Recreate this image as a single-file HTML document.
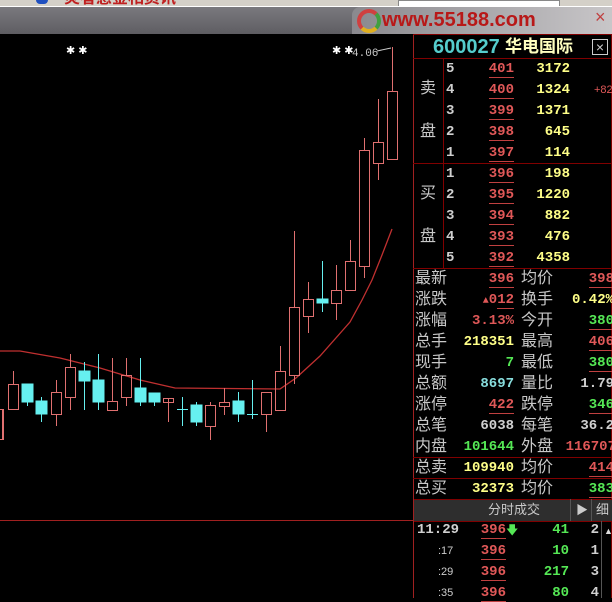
<!DOCTYPE html>
<html><head><meta charset="utf-8"><style>
*{margin:0;padding:0}
body{width:612px;height:598px;background:#000;overflow:hidden;position:relative;font-family:"Liberation Sans","Noto Sans CJK SC",sans-serif}
.a{position:absolute;white-space:nowrap;line-height:18px}
.cj{font-size:16px;color:#c8c8c8}
.n{font-size:14px;font-weight:bold;font-family:"Liberation Mono","Noto Sans CJK SC",monospace;text-align:right}
.r{color:#e05858}.y{color:#ffff88}.g{color:#55e855}.w{color:#d0d0d0}.c{color:#88dddd}
.hl{position:absolute;height:1px;background:#800000}
.vl{position:absolute;width:1px;background:#800000}
u{text-decoration:none;border-bottom:1px solid #c04040}
</style></head><body>
<div style="position:absolute;left:0;top:0;width:612px;height:6px;background:#d4d0c8"></div>
<div style="position:absolute;left:36px;top:-4px;width:12px;height:8px;border-radius:6px;background:#2050c0"></div>
<div class="a" style="left:64px;top:-10px;font-size:16px;color:#c02020;font-weight:bold">炎者感金相资讯</div>
<div style="position:absolute;left:398px;top:0;width:160px;height:5px;background:#fff;border:1px solid #888"></div>
<div style="position:absolute;left:0;top:6px;width:612px;height:1px;background:#fff"></div>
<div style="position:absolute;left:0;top:7px;width:612px;height:27px;background:linear-gradient(#7a797e,#5e5d62)"></div>
<div style="position:absolute;left:352px;top:7px;width:260px;height:27px;background:linear-gradient(90deg,#8a898e,#c8c6c8);border-radius:8px 0 0 0"></div>
<div style="position:absolute;left:357px;top:9px;width:16px;height:16px;border-radius:50%;border:4px solid #d04040;border-right-color:#40a040;border-bottom-color:#e0b020"></div>
<div class="a" style="left:382px;top:7px;font-size:20px;font-weight:bold;color:#b81818;line-height:26px">www.55188.com</div>
<div class="a" style="left:595px;top:8px;font-size:18px;color:#c04040">×</div>

<svg style="position:absolute;left:0;top:0" width="413" height="598">
<line x1="0" y1="520.5" x2="413" y2="520.5" stroke="#a02020"/>
<g fill="#fff" font-size="11"><text x="66" y="54">✱ ✱</text><text x="332" y="54">✱ ✱</text></g>
<text x="352" y="56" fill="#c8c8c8" font-size="11" font-family="Liberation Mono">4.06</text>
<path d="M377 51 L391 48" stroke="#ccc" fill="none"/>
<path d="M0 351 L20 351 L60 358 L100 368 L140 380 L175 388 L280 389 L296 378 L320 356 L350 322 L362 300 L372 280 L382 255 L392 229" stroke="#c03030" fill="none" stroke-width="1.3"/>
<g stroke="#e07070" fill="none">
<path d="M2.5 409V440M13.5 371V384M13.5 409V410M56.5 380V392M56.5 414V426M70.5 354V367M70.5 397V410M112.5 358V401M126.5 358V375M126.5 397V406M168.5 398V422M210.5 402V405M210.5 426V440M224.5 388V402M224.5 406V415M266.5 414V432M280.5 346V371M294.5 231V307M294.5 375V384M308.5 282V299M308.5 316V333M336.5 265V290M336.5 303V320M350.5 240V261M364.5 138V150M364.5 266V278M378.5 99V142M378.5 163V180M392.5 47V91"/>
<rect x="-3.5" y="409.5" width="7" height="30"/><rect x="8.5" y="384.5" width="10" height="25"/><rect x="51.5" y="392.5" width="10" height="22"/><rect x="65.5" y="367.5" width="10" height="30"/><rect x="107.5" y="401.5" width="10" height="9"/><rect x="121.5" y="375.5" width="10" height="22"/><rect x="163.5" y="398.5" width="10" height="4"/><rect x="205.5" y="405.5" width="10" height="21"/><rect x="219.5" y="402.5" width="10" height="4"/><rect x="261.5" y="392.5" width="10" height="22"/><rect x="275.5" y="371.5" width="10" height="39"/><rect x="289.5" y="307.5" width="10" height="68"/><rect x="303.5" y="299.5" width="10" height="17"/><rect x="331.5" y="290.5" width="10" height="13"/><rect x="345.5" y="261.5" width="10" height="29"/><rect x="359.5" y="150.5" width="10" height="116"/><rect x="373.5" y="142.5" width="10" height="21"/><rect x="387.5" y="91.5" width="10" height="68"/>
</g>
<g fill="#66f0f0" stroke="#66f0f0">
<path d="M27.5 402V406M41.5 397V422M84.5 362V410M98.5 354V410M140.5 358V406M154.5 402V406M182.5 397V426M196.5 402V426M238.5 392V422M252.5 380V419M322.5 261V312M177 409.5H188M247 414.5H258" fill="none"/>
<rect x="22" y="384" width="11" height="18"/><rect x="36" y="401" width="11" height="13"/><rect x="79" y="371" width="11" height="10"/><rect x="93" y="380" width="11" height="22"/><rect x="135" y="388" width="11" height="14"/><rect x="149" y="393" width="11" height="9"/><rect x="191" y="405" width="11" height="17"/><rect x="233" y="401" width="11" height="13"/><rect x="317" y="299" width="11" height="4"/>
</g>
</svg>

<div class="vl" style="left:413px;top:34px;height:564px;background:#a02020"></div>
<div class="vl" style="left:611px;top:34px;height:564px"></div>
<div class="hl" style="left:413px;top:34px;width:199px"></div>
<div class="a" style="left:433px;top:35px;font-size:20px;font-weight:bold;color:#55cccc;line-height:24px">600027</div>
<div class="a" style="left:505px;top:35px;font-size:17px;font-weight:bold;color:#ffffc0;line-height:24px">华电国际</div>
<div style="position:absolute;left:592px;top:39px;width:14px;height:14px;border:1px solid #ccc;color:#ccc;font-size:14px;line-height:14px;text-align:center">×</div>
<div class="hl" style="left:413px;top:58px;width:199px"></div>
<div class="hl" style="left:413px;top:163px;width:199px"></div>
<div class="hl" style="left:413px;top:268px;width:199px"></div>
<div class="vl" style="left:443px;top:58px;height:210px"></div>
<div class="a cj" style="left:420px;top:80px">卖</div><div class="a cj" style="left:420px;top:123px">盘</div>
<div class="a cj" style="left:420px;top:185px">买</div><div class="a cj" style="left:420px;top:228px">盘</div>
<div class="a" style="left:594px;top:81px;font-size:11px;color:#e05858">+82</div>

<div class="a n w" style="left:446px;top:60px">5</div><div class="a n r" style="left:470px;top:60px;width:44px"><u>401</u></div><div class="a n y" style="left:520px;top:60px;width:50px">3172</div>
<div class="a n w" style="left:446px;top:81px">4</div><div class="a n r" style="left:470px;top:81px;width:44px"><u>400</u></div><div class="a n y" style="left:520px;top:81px;width:50px">1324</div>
<div class="a n w" style="left:446px;top:102px">3</div><div class="a n r" style="left:470px;top:102px;width:44px"><u>399</u></div><div class="a n y" style="left:520px;top:102px;width:50px">1371</div>
<div class="a n w" style="left:446px;top:123px">2</div><div class="a n r" style="left:470px;top:123px;width:44px"><u>398</u></div><div class="a n y" style="left:520px;top:123px;width:50px">645</div>
<div class="a n w" style="left:446px;top:144px">1</div><div class="a n r" style="left:470px;top:144px;width:44px"><u>397</u></div><div class="a n y" style="left:520px;top:144px;width:50px">114</div>
<div class="a n w" style="left:446px;top:165px">1</div><div class="a n r" style="left:470px;top:165px;width:44px"><u>396</u></div><div class="a n y" style="left:520px;top:165px;width:50px">198</div>
<div class="a n w" style="left:446px;top:186px">2</div><div class="a n r" style="left:470px;top:186px;width:44px"><u>395</u></div><div class="a n y" style="left:520px;top:186px;width:50px">1220</div>
<div class="a n w" style="left:446px;top:207px">3</div><div class="a n r" style="left:470px;top:207px;width:44px"><u>394</u></div><div class="a n y" style="left:520px;top:207px;width:50px">882</div>
<div class="a n w" style="left:446px;top:228px">4</div><div class="a n r" style="left:470px;top:228px;width:44px"><u>393</u></div><div class="a n y" style="left:520px;top:228px;width:50px">476</div>
<div class="a n w" style="left:446px;top:249px">5</div><div class="a n r" style="left:470px;top:249px;width:44px"><u>392</u></div><div class="a n y" style="left:520px;top:249px;width:50px">4358</div>

<div class="a cj" style="left:415px;top:270px">最新</div><div class="a n r" style="left:450px;top:270px;width:64px"><u>396</u></div><div class="a cj" style="left:521px;top:270px">均价</div><div class="a n r" style="left:560px;top:270px;width:54px"><u>398</u></div>
<div class="a cj" style="left:415px;top:291px">涨跌</div><div class="a n r" style="left:450px;top:291px;width:64px"><span style="font-size:10px">▲</span>0<u>12</u></div><div class="a cj" style="left:521px;top:291px">换手</div><div class="a n y" style="left:560px;top:291px;width:54px">0.42%</div>
<div class="a cj" style="left:415px;top:312px">涨幅</div><div class="a n r" style="left:450px;top:312px;width:64px">3.13%</div><div class="a cj" style="left:521px;top:312px">今开</div><div class="a n g" style="left:560px;top:312px;width:54px"><u>380</u></div>
<div class="a cj" style="left:415px;top:333px">总手</div><div class="a n y" style="left:450px;top:333px;width:64px">218351</div><div class="a cj" style="left:521px;top:333px">最高</div><div class="a n r" style="left:560px;top:333px;width:54px"><u>406</u></div>
<div class="a cj" style="left:415px;top:354px">现手</div><div class="a n g" style="left:450px;top:354px;width:64px">7</div><div class="a cj" style="left:521px;top:354px">最低</div><div class="a n g" style="left:560px;top:354px;width:54px"><u>380</u></div>
<div class="a cj" style="left:415px;top:375px">总额</div><div class="a n c" style="left:450px;top:375px;width:64px">8697</div><div class="a cj" style="left:521px;top:375px">量比</div><div class="a n w" style="left:560px;top:375px;width:54px">1.79</div>
<div class="a cj" style="left:415px;top:396px">涨停</div><div class="a n r" style="left:450px;top:396px;width:64px"><u>422</u></div><div class="a cj" style="left:521px;top:396px">跌停</div><div class="a n g" style="left:560px;top:396px;width:54px"><u>346</u></div>
<div class="a cj" style="left:415px;top:417px">总笔</div><div class="a n w" style="left:450px;top:417px;width:64px">6038</div><div class="a cj" style="left:521px;top:417px">每笔</div><div class="a n w" style="left:560px;top:417px;width:54px">36.2</div>
<div class="a cj" style="left:415px;top:438px">内盘</div><div class="a n g" style="left:450px;top:438px;width:64px">101644</div><div class="a cj" style="left:521px;top:438px">外盘</div><div class="a n r" style="left:550px;top:438px;width:66px">116707</div>
<div class="hl" style="left:413px;top:457px;width:199px"></div>
<div class="a cj" style="left:415px;top:459px">总卖</div><div class="a n y" style="left:450px;top:459px;width:64px">109940</div><div class="a cj" style="left:521px;top:459px">均价</div><div class="a n r" style="left:560px;top:459px;width:54px"><u>414</u></div>
<div class="hl" style="left:413px;top:478px;width:199px"></div>
<div class="a cj" style="left:415px;top:480px">总买</div><div class="a n y" style="left:450px;top:480px;width:64px">32373</div><div class="a cj" style="left:521px;top:480px">均价</div><div class="a n g" style="left:560px;top:480px;width:54px"><u>383</u></div>
<div style="position:absolute;left:414px;top:499px;width:198px;height:21px;background:#2e2e2e;border-top:1px solid #800000;border-bottom:1px solid #800000"></div>
<div class="a" style="left:488px;top:501px;font-size:13px;color:#c8c8c8">分时成交</div>
<div class="vl" style="left:570px;top:499px;height:22px;background:#555"></div>
<div class="vl" style="left:591px;top:499px;height:22px;background:#555"></div>
<div class="a" style="left:576px;top:501px;font-size:12px;color:#ccc">▶</div>
<div class="a" style="left:596px;top:501px;font-size:13px;color:#ccc">细</div>
<div class="vl" style="left:601px;top:521px;height:77px;background:#555"></div>
<div class="a" style="left:604px;top:522px;font-size:9px;color:#ddd">▲</div>

<div class="a n w" style="left:417px;top:521px">11:29</div><div class="a n r" style="left:470px;top:521px;width:36px"><u>396</u></div><div class="a g" style="left:506px;top:521px;font-size:12px">🡇</div><div class="a n g" style="left:530px;top:521px;width:39px">41</div><div class="a n w" style="left:580px;top:521px;width:19px">2</div>
<div class="a" style="left:438px;top:542px;font-size:11px;color:#ccc;line-height:18px">:17</div><div class="a n r" style="left:470px;top:542px;width:36px"><u>396</u></div><div class="a n g" style="left:530px;top:542px;width:39px">10</div><div class="a n w" style="left:580px;top:542px;width:19px">1</div>
<div class="a" style="left:438px;top:563px;font-size:11px;color:#ccc;line-height:18px">:29</div><div class="a n r" style="left:470px;top:563px;width:36px"><u>396</u></div><div class="a n g" style="left:530px;top:563px;width:39px">217</div><div class="a n w" style="left:580px;top:563px;width:19px">3</div>
<div class="a" style="left:438px;top:584px;font-size:11px;color:#ccc;line-height:18px">:35</div><div class="a n r" style="left:470px;top:584px;width:36px"><u>396</u></div><div class="a n g" style="left:530px;top:584px;width:39px">80</div><div class="a n w" style="left:580px;top:584px;width:19px">4</div>
</body></html>
